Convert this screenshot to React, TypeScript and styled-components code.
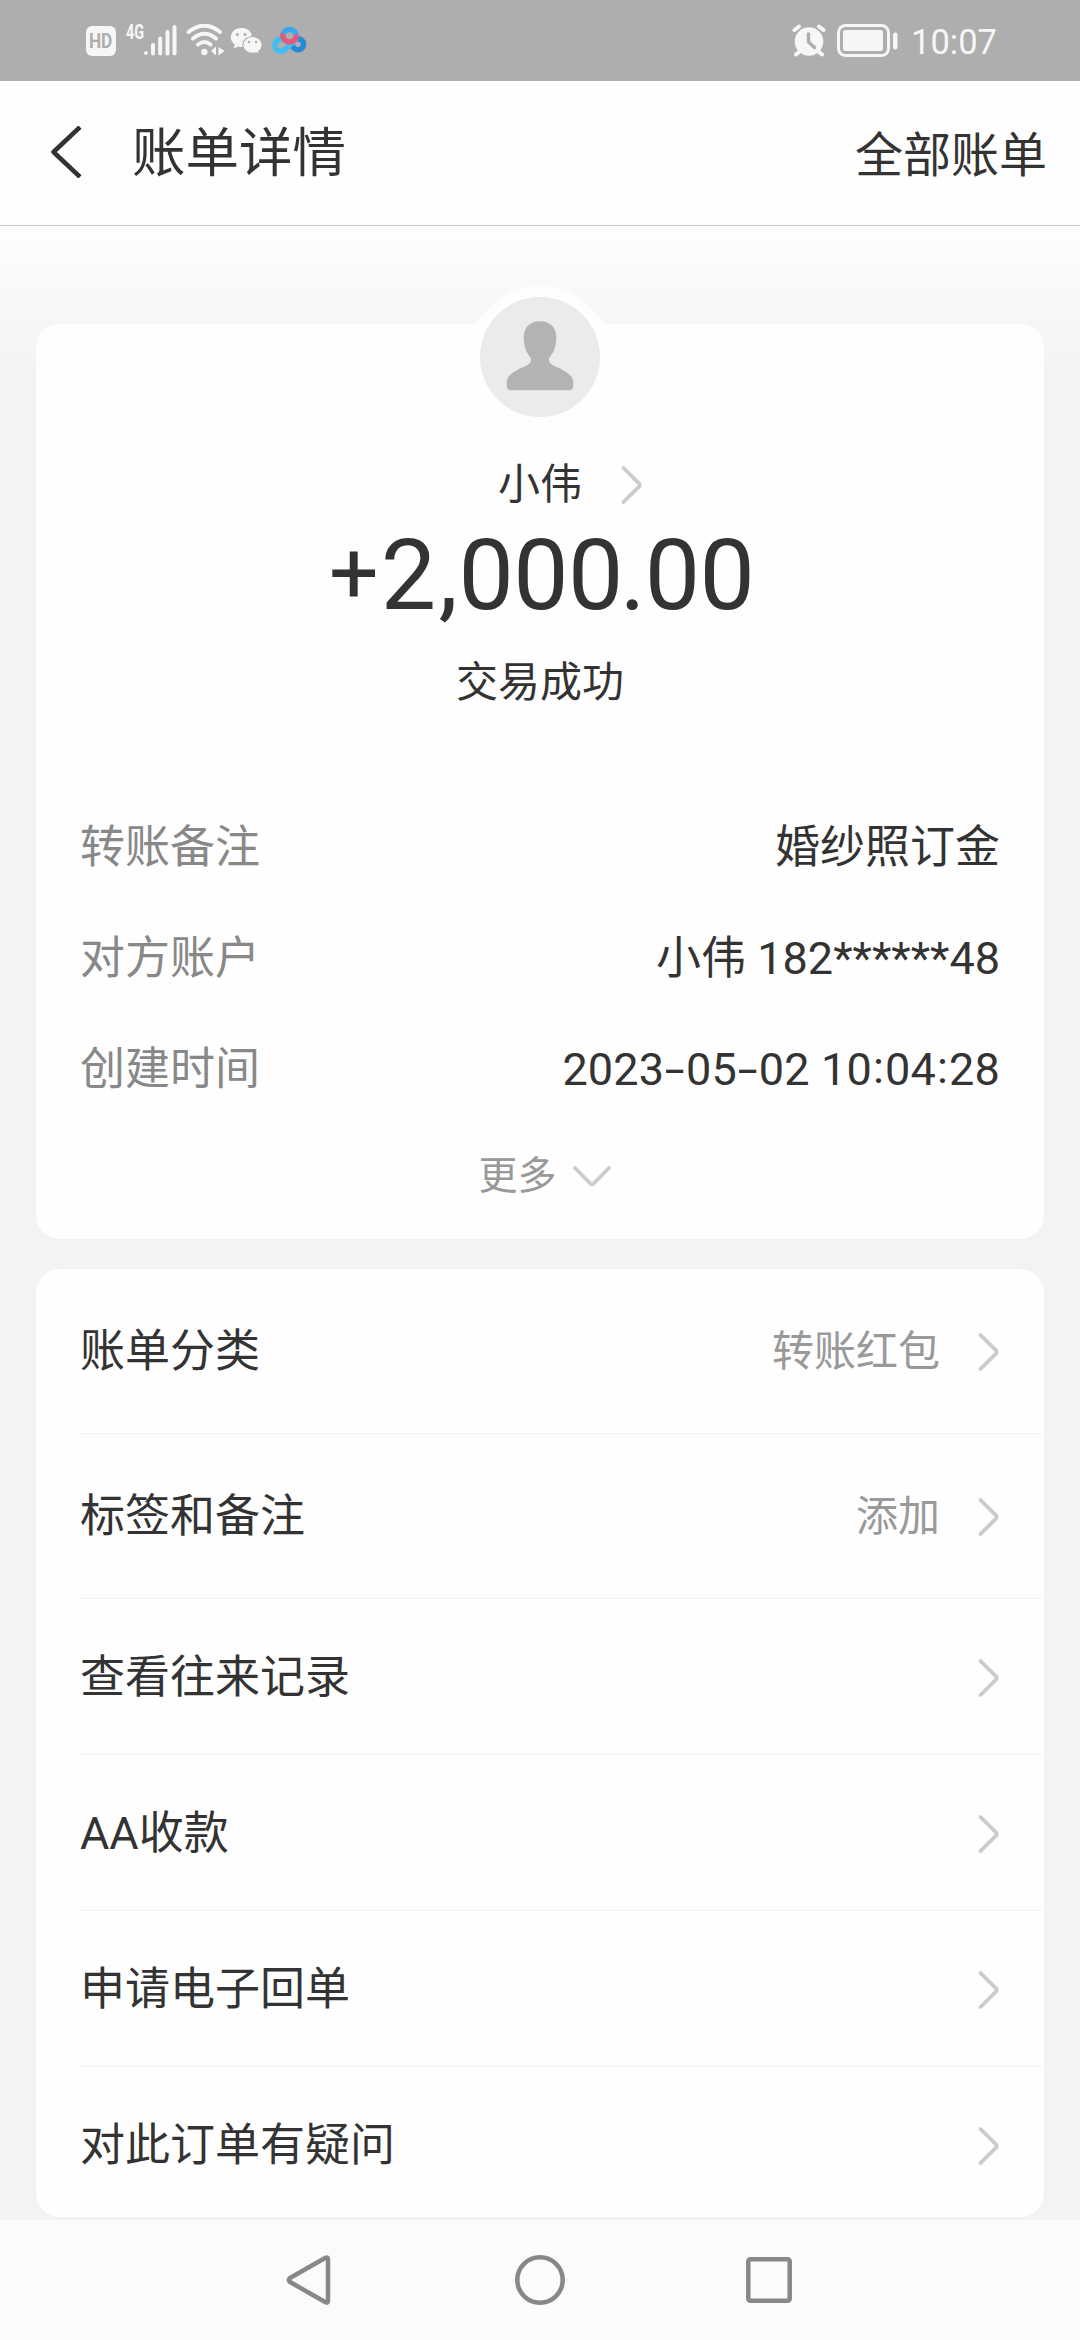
import React from "react";
import styled, { createGlobalStyle } from "styled-components";

const GlobalStyle = createGlobalStyle`
  * { box-sizing: border-box; }
  html, body { margin: 0; padding: 0; background: #f3f3f3; }
  body {
    font-family: Roboto, "Noto Sans CJK SC", sans-serif;
    color: #333;
  }
  svg { display: block; flex: none; }
`;

const Screen = styled.div`
  width: 1080px;
  height: 2340px;
  display: flex;
  flex-direction: column;
  overflow: hidden;
  background: #f3f3f3;
`;

const StatusBar = styled.header`
  height: 81px;
  flex: none;
  display: flex;
  justify-content: space-between;
  padding: 0 87px 0 86px;
  background: #aeaeae;
  color: #f6f6f6;
`;

const StatusGroup = styled.div`
  display: flex;
  align-items: flex-start;
  padding-top: 24px;
`;

const HdBadge = styled.span`
  width: 30px;
  height: 30px;
  display: flex;
  justify-content: center;
  margin-top: 2px;
  border-radius: 6px;
  background: #f6f6f6;
  color: #aeaeae;
  font: 700 20px/31px Roboto, sans-serif;

  & > span { transform: scaleX(0.86); }
`;

const NetworkType = styled.span`
  width: 18px;
  margin-left: 10px;
  font: 700 20px/16px Roboto, sans-serif;
  transform: scaleX(0.72);
  transform-origin: left;
`;

const StatusIcon = styled.svg<{ $gap: number }>`
  margin-left: ${(p) => p.$gap}px;
`;

const Clock = styled.time`
  margin-left: 12px;
  width: 82px;
  font: 400 34.5px/36px Roboto, sans-serif;
  white-space: nowrap;
`;

const TitleBar = styled.div`
  height: 145px;
  flex: none;
  display: flex;
  align-items: center;
  padding: 0 33px 2px 50px;
  background: #fefefe;
  border-bottom: 1px solid #c6c6c6;
`;

const Title = styled.h1`
  margin: 0 auto 0 50px;
  padding-top: 3px;
  font-size: 53.5px;
  line-height: 70px;
  font-weight: 400;
`;

const AllBills = styled.a`
  font-size: 48px;
  line-height: 64px;
  padding-top: 7px;
`;

const Content = styled.main`
  height: 1994px;
  flex: none;
  display: flex;
  flex-direction: column;
  gap: 30px;
  padding: 98px 36px 0;
  background: linear-gradient(#fefefe 0, #fafafa 50px, #f3f3f3 150px);
`;

const Card = styled.section<{ $height: number }>`
  height: ${(p) => p.$height}px;
  flex: none;
  border-radius: 24px;
  background: #fefefe;
`;

const Summary = styled(Card)`
  display: flex;
  flex-direction: column;
  align-items: center;
`;

const Avatar = styled.div`
  width: 120px;
  height: 120px;
  flex: none;
  margin-top: -27px;
  border-radius: 50%;
  background: #ebebeb;
  box-shadow: 0 0 0 10px #fefefe, 0 0 3px 11px #fefefe;
`;

const Payee = styled.div`
  display: grid;
  grid-template-columns: 1fr auto 1fr;
  align-items: center;
  width: 100%;
  height: 60px;
  margin-top: 38px;
  font-size: 42px;
  line-height: 60px;

  & > span { grid-column: 2; }
  & > svg { margin: 0 0 0 39px; }
`;

const Amount = styled.div`
  display: flex;
  height: 110px;
  margin-top: 6px;
  font-size: 98.5px;
  line-height: 110px;
  letter-spacing: -0.6px;
  white-space: nowrap;
`;

const Sign = styled.span`
  width: 55px;
  transform: translateY(-2px) scale(0.89);
`;

const Separator = styled.span<{ $width: number; $shift?: number }>`
  width: ${(p) => p.$width}px;
  text-align: center;
  text-indent: ${(p) => p.$shift ?? 0}px;
`;

const Result = styled.div`
  margin-top: 22px;
  font-size: 42px;
  line-height: 60px;
`;

const Details = styled.dl`
  width: 100%;
  margin: 79px 0 0;
  padding: 0 44px;
`;

const DetailRow = styled.div`
  height: 111px;
  display: flex;
  justify-content: space-between;
  align-items: center;
  font-size: 45px;
  line-height: 60px;
`;

const DetailLabel = styled.dt`
  color: #888;
`;

const DetailValue = styled.dd`
  margin: 0;
  white-space: nowrap;
`;

const Timestamp = styled.time`
  letter-spacing: 0.2px;
`;

const Dash = styled.span`
  display: inline-block;
  width: 21.7px;
  text-align: center;
  transform: scaleX(1.6);
`;

const Colon = styled.span`
  display: inline-block;
  width: 13px;
  text-align: center;
  transform: translateY(-2px);
`;

const More = styled.div`
  display: flex;
  align-items: center;
  gap: 16px;
  margin: 23px 0 0 9px;
  font-size: 39px;
  line-height: 56px;
  color: #999;
`;

const ActionRow = styled.div<{ $height: number; $last?: boolean }>`
  height: ${(p) => p.$height}px;
  display: flex;
  align-items: center;
  margin: 0 3px 0 42px;
  padding: 2px 42px 0 2px;
  border-bottom: ${(p) => (p.$last ? "0" : "1px")} solid #f4f4f4;
  font-size: 45px;
  line-height: 60px;

  & > svg { margin-left: 38px; }
`;

const ActionLabel = styled.span`
  margin-right: auto;
`;

const ActionValue = styled.span`
  font-size: 42px;
  color: #999;
`;

const NavBar = styled.nav`
  height: 120px;
  flex: none;
  display: flex;
  justify-content: center;
  align-items: center;
  gap: 179px;
  background: #fbfbfb;
`;

const Chevron = () => (
  <svg width="21" height="38" viewBox="0 0 21 38" fill="none" stroke="#cbcbcb" strokeWidth="3.8" strokeLinecap="round" strokeLinejoin="round">
    <path d="M2.500 2L17.500 16.800Q20 19 17.500 21.200L2.500 36" />
  </svg>
);

const ChevronDown = () => (
  <svg width="38" height="21" viewBox="0 0 38 21" fill="none" stroke="#cbcbcb" strokeWidth="3.8" strokeLinecap="round" strokeLinejoin="round">
    <path d="M2 2L16.800 17Q19 19.500 21.200 17L36 2" />
  </svg>
);

const actions = [
  { label: "账单分类", value: "转账红包", height: 165 },
  { label: "标签和备注", value: "添加", height: 165 },
  { label: "查看往来记录", height: 156 },
  { label: "AA收款", height: 156 },
  { label: "申请电子回单", height: 156 },
  { label: "对此订单有疑问", height: 156 },
];

export default function App() {
  return (
    <Screen>
      <GlobalStyle />
      <StatusBar>
        <StatusGroup>
          <HdBadge><span>HD</span></HdBadge>
          <NetworkType>4G</NetworkType>
          <StatusIcon $gap={0} width="34" height="33" viewBox="0 0 34 33" stroke="#f6f6f6" strokeWidth="4" strokeLinecap="round">
            <path d="M2 29v.1M9 21v8.5M16.200 14.500v15M23.500 8v21.500M30.500 3v26.500" />
          </StatusIcon>
          <StatusIcon $gap={8} width="39" height="33" viewBox="0 0 39 33" fill="none" stroke="#f6f6f6" strokeWidth="4" strokeLinecap="round">
            <path d="M2.500 8Q18.500-4.500 34 8M7 14.500Q18.500 5 30 14.500M12 20.500Q18.500 15.500 24.500 20.500" />
            <circle cx="18.300" cy="28" r="3.200" fill="#f6f6f6" stroke="none" />
            <path d="M30 22.500v9l-5-4.500zM32.500 23l6 4-6 4.500z" fill="#f6f6f6" stroke="none" />
          </StatusIcon>
          <StatusIcon $gap={5} width="33" height="33" viewBox="0 0 33 33" fill="#f6f6f6">
            <path d="M11.500 4C5 4 .8 8.200.8 13.300c0 3 1.500 5.500 4 7.300l-1.200 4 4.600-2.200c1.200.3 2.300.5 3.600.5h8v-10l2-2C20 6.500 17 4 11.500 4z" />
            <path d="M22.500 12.500c-5.500 0-9.700 3.700-9.700 8.400 0 4.800 4.200 8.400 9.700 8.400 1.300 0 2.500-.2 3.600-.6l3.400 1.800-.8-3.200c2.300-1.700 3.500-3.900 3.500-6.400 0-4.700-4.200-8.400-9.700-8.400z" stroke="#aeaeae" strokeWidth="1.200" />
            <g fill="#aeaeae"><circle cx="7.300" cy="10.500" r="1.500" /><circle cx="15" cy="10.500" r="1.500" /><circle cx="19" cy="18" r="1.300" /><circle cx="26" cy="18" r="1.300" /></g>
          </StatusIcon>
          <StatusIcon $gap={9} width="35" height="33" viewBox="0 0 35 33" fill="none" strokeWidth="5.500" strokeLinecap="round">
            <path d="M20.500 22.500l1.500 1.500a5.500 5.500 0 1 0 2-8.800" stroke="#258ad5" />
            <path d="M23.500 15.300L13.500 25a6 6 0 1 1-1-8.500" stroke="#42bdf1" />
            <path d="M10.800 11.500a6.800 6.800 0 0 1 13.500 0" stroke="#3ba7ec" />
            <path d="M10.800 12a6.800 6.800 0 0 0 13.300 1" stroke="#e5597b" />
          </StatusIcon>
        </StatusGroup>
        <StatusGroup>
          <StatusIcon $gap={0} width="34" height="33" viewBox="0 0 34 33" fill="none" strokeLinecap="round">
            <circle cx="17" cy="17.500" r="14.300" fill="#f6f6f6" />
            <path d="M2.500 6L7 2.500M27 2.500L31.500 6M8 27l-4 3.500M26 27l4 3.500" stroke="#f6f6f6" strokeWidth="4" />
            <path d="M16.500 10v8l6 5.500" stroke="#aeaeae" strokeWidth="3.500" strokeLinejoin="round" />
          </StatusIcon>
          <StatusIcon $gap={11} width="62" height="33" viewBox="0 0 62 33" fill="#f6f6f6">
            <rect x="1.500" y="1.500" width="50" height="30" rx="7" fill="none" stroke="#f6f6f6" strokeWidth="3" />
            <rect x="6" y="6" width="40" height="21" rx="2.500" />
            <rect x="56" y="8.500" width="4.500" height="17" rx="2.200" />
          </StatusIcon>
          <Clock>10:07</Clock>
        </StatusGroup>
      </StatusBar>

      <TitleBar>
        <svg width="32" height="52" viewBox="0 0 32 52" fill="none" stroke="#333" strokeWidth="4.500">
          <path d="M30 1L3.500 26 30 51" strokeLinejoin="round" />
        </svg>
        <Title>账单详情</Title>
        <AllBills>全部账单</AllBills>
      </TitleBar>

      <Content>
        <Summary $height={915}>
          <Avatar>
            <svg width="120" height="120" viewBox="0 0 120 120" fill="#b3b3b3">
              <path d="M60 24.300c-11 0-16.500 7-16.300 17 .2 9 3 15 7 19.500 1.500 3.500-1 6.500-4.500 8-7 3-14 6.500-17.500 11-2 2.500-2 4.500-2 8.500 0 3 1.300 5 3.800 5h59c2.500 0 3.800-2 3.800-5 0-4 0-6-2-8.500-3.500-4.500-10.500-8-17.500-11-3.500-1.500-6-4.500-4.500-8 4-4.500 6.800-10.500 7-19.500.2-10-5.300-17-16.300-17z" />
            </svg>
          </Avatar>
          <Payee>
            <span>小伟</span>
            <Chevron />
          </Payee>
          <Amount>
            <Sign>+</Sign>2<Separator $width={23} $shift={2}>,</Separator>000<Separator $width={22} $shift={-3}>.</Separator>00
          </Amount>
          <Result>交易成功</Result>
          <Details>
            <DetailRow>
              <DetailLabel>转账备注</DetailLabel>
              <DetailValue>婚纱照订金</DetailValue>
            </DetailRow>
            <DetailRow>
              <DetailLabel>对方账户</DetailLabel>
              <DetailValue>小伟 182******48</DetailValue>
            </DetailRow>
            <DetailRow>
              <DetailLabel>创建时间</DetailLabel>
              <DetailValue>
                <Timestamp>
                  2023<Dash>-</Dash>05<Dash>-</Dash>02 10<Colon>:</Colon>04<Colon>:</Colon>28
                </Timestamp>
              </DetailValue>
            </DetailRow>
          </Details>
          <More>
            更多
            <ChevronDown />
          </More>
        </Summary>

        <Card $height={948}>
          {actions.map((a, i) => (
            <ActionRow key={a.label} $height={a.height} $last={i === actions.length - 1}>
              <ActionLabel>{a.label}</ActionLabel>
              {a.value && <ActionValue>{a.value}</ActionValue>}
              <Chevron />
            </ActionRow>
          ))}
        </Card>
      </Content>

      <NavBar>
        <svg width="50" height="50" viewBox="0 0 50 50" fill="none" stroke="#888" strokeWidth="4.500" strokeLinejoin="round">
          <path d="M39.500 2.800Q42 1.500 42 4.500v41q0 3-2.500 1.700L4 27Q1.500 25 4 23z" />
        </svg>
        <svg width="50" height="50" viewBox="0 0 50 50" fill="none" stroke="#888" strokeWidth="4.500">
          <circle cx="25" cy="25" r="22.700" />
        </svg>
        <svg width="50" height="50" viewBox="0 0 50 50" fill="none" stroke="#888" strokeWidth="4.500">
          <rect x="4.300" y="4.300" width="41.400" height="41.400" rx="2" />
        </svg>
      </NavBar>
    </Screen>
  );
}
